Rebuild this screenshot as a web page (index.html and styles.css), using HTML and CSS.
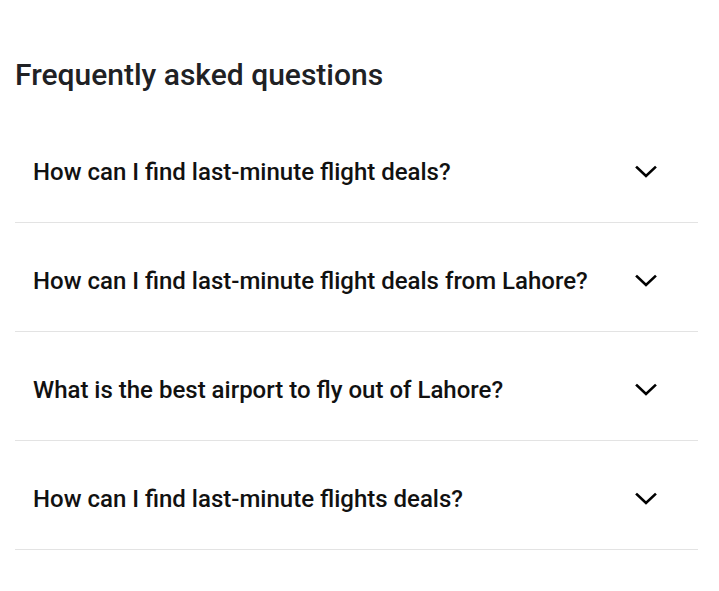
FILE: index.html
```html
<!DOCTYPE html>
<html>
<head>
<meta charset="utf-8">
<link rel="stylesheet" href="styles.css">
</head>
<body>
<section class="faq">
  <h2 class="faq-title">Frequently asked questions</h2>
  <div class="faq-list">
    <div class="faq-item">
      <span class="faq-q">How can I find last-minute flight deals?</span>
      <svg class="chev" width="24" height="24" viewBox="0 0 24 24"><polyline points="3,7.5 12,16 21,7.5" fill="none" stroke="#000" stroke-width="2.6" stroke-linecap="square"/></svg>
    </div>
    <div class="faq-item">
      <span class="faq-q">How can I find last-minute flight deals from Lahore?</span>
      <svg class="chev" width="24" height="24" viewBox="0 0 24 24"><polyline points="3,7.5 12,16 21,7.5" fill="none" stroke="#000" stroke-width="2.6" stroke-linecap="square"/></svg>
    </div>
    <div class="faq-item">
      <span class="faq-q">What is the best airport to fly out of Lahore?</span>
      <svg class="chev" width="24" height="24" viewBox="0 0 24 24"><polyline points="3,7.5 12,16 21,7.5" fill="none" stroke="#000" stroke-width="2.6" stroke-linecap="square"/></svg>
    </div>
    <div class="faq-item">
      <span class="faq-q">How can I find last-minute flights deals?</span>
      <svg class="chev" width="24" height="24" viewBox="0 0 24 24"><polyline points="3,7.5 12,16 21,7.5" fill="none" stroke="#000" stroke-width="2.6" stroke-linecap="square"/></svg>
    </div>
  </div>
</section>
</body>
</html>
```
FILE: styles.css
```css
html, body {
  margin: 0;
  padding: 0;
  background: #fff;
}
body {
  font-family: Roboto, "Noto Sans", Arial, sans-serif;
  color: #202124;
}
.faq {
  width: 683px;
  padding: 57px 0 0 15px;
}
.faq-title {
  margin: 0;
  font-size: 30px;
  font-weight: 500;
  line-height: 36px;
  color: #202124;
}
.faq-list {
  margin-top: 21px;
}
.faq-item {
  display: flex;
  align-items: center;
  justify-content: space-between;
  box-sizing: border-box;
  height: 109px;
  padding: 8px 40px 0 18px;
  border-bottom: 1px solid #e3e3e3;
}
.faq-q {
  font-size: 24px;
  font-weight: 500;
  line-height: 30px;
  color: #111;
}
.chev {
  display: block;
}
```
